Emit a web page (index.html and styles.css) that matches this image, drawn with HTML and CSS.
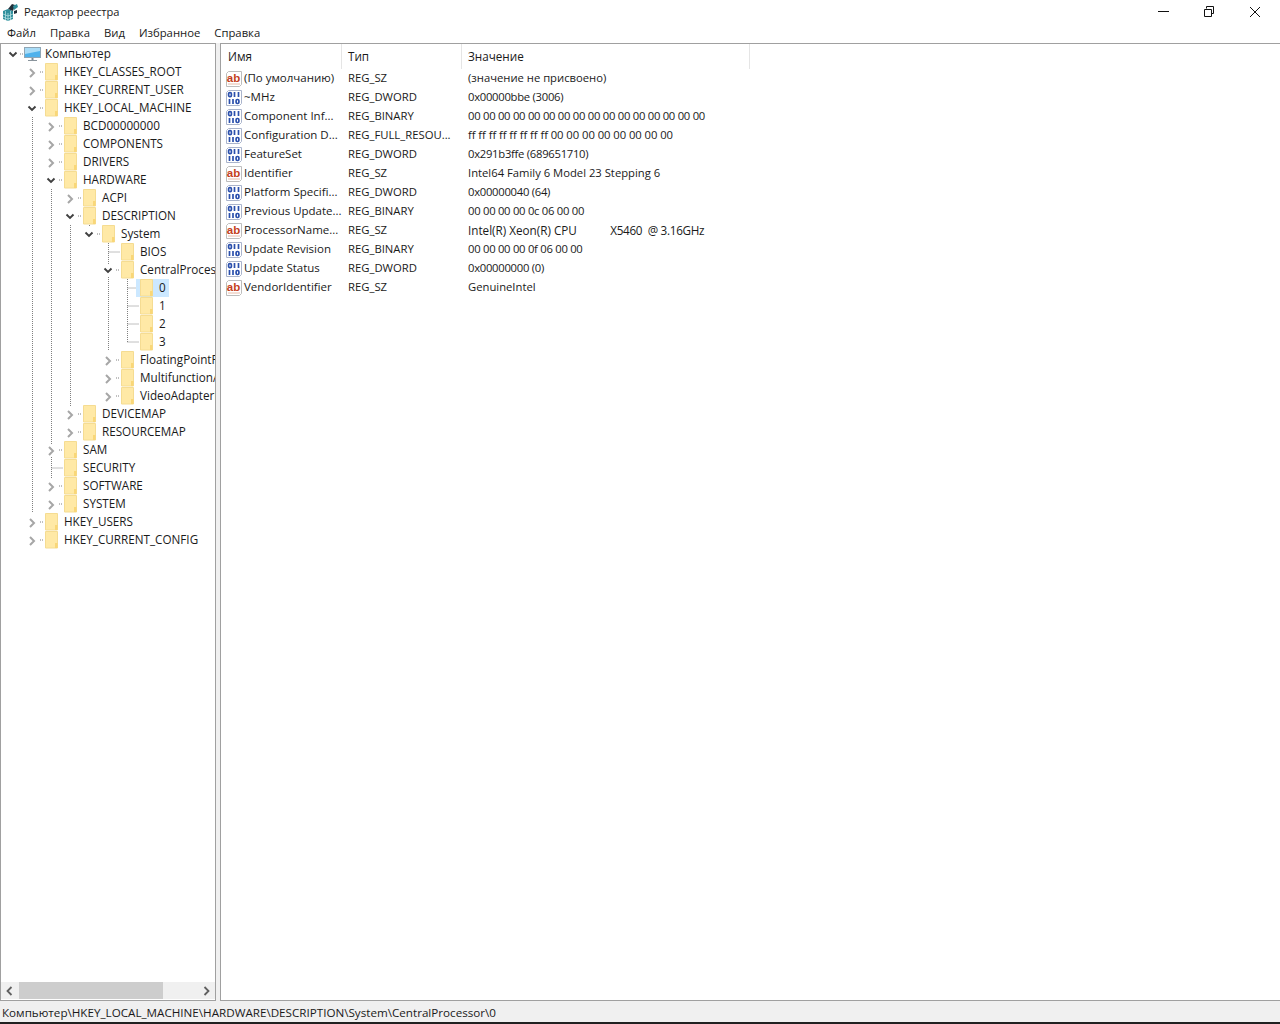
FILE: index.html
```html
<!DOCTYPE html>
<html lang="ru">
<head>
<meta charset="utf-8">
<title>Редактор реестра</title>
<link rel="stylesheet" href="styles.css">
</head>
<body>
<svg class="defs" width="0" height="0">
  <defs>
    <symbol id="folder" viewBox="0 0 13 18">
      <path d="M.5.5h12v16.500H.5z" fill="#ffe9a6" stroke="#f5dc92"/>
      <path d="M10 12h2.500v5H10z" fill="#f9d778"/>
    </symbol>
    <symbol id="str" viewBox="0 0 16 16">
      <path d="M.5 2.500l2-2h13v13l-2 2H.500z" fill="#fff" stroke="#bdbdbd"/>
      <text x="7.500" y="10.500" text-anchor="middle" class="ab">ab</text>
      <path d="M2 13h12" stroke="#e6bba8"/>
    </symbol>
    <symbol id="bin" viewBox="0 0 16 16">
      <path d="M.5 2.500l2-2h13v13l-2 2H.500z" fill="#fff" stroke="#aab4cc"/>
      <g fill="none" stroke="#2b50ad" stroke-width="1.700">
        <rect x="2.600" y="2.600" width="2.800" height="4" rx="1.200"/>
        <path d="M8.500 2v5M12.500 2v5"/>
        <path d="M3.500 9v5M7 9v5"/>
        <rect x="10.100" y="9.500" width="2.800" height="4" rx="1.200"/>
      </g>
    </symbol>
    <symbol id="chev-r" viewBox="0 0 18 18">
      <rect x="1" y="4" width="9" height="12" fill="#fff"/>
      <path d="M3 6l4 4-4 4" fill="none" stroke="#a6a6a6" stroke-width="2"/>
    </symbol>
    <symbol id="chev-d" viewBox="0 0 18 18">
      <rect x="0" y="4" width="11" height="11" fill="#fff"/>
      <path d="M1.500 7.500L5 11l3.500-3.500" fill="none" stroke="#404040" stroke-width="1.900"/>
    </symbol>
  </defs>
</svg>

<header class="titlebar">
  <svg class="app-icon" width="18" height="18" viewBox="0 0 18 18">
    <path d="M2 8l5-2 5 2v8l-5 2-5-2z" fill="#2f8f9c"/>
    <path d="M7 10v8M2 11l5 2 5-2M2 14l5 2 5-2M4.500 8v9M9.500 8v9" stroke="#bfe6e8" stroke-width=".7" fill="none"/>
    <path d="M7 6l4-5 3 1-2 6z" fill="#23303a"/>
    <path d="M12 3l4-2 1 3-4 3z" fill="#2f8f9c"/>
    <path d="M13 8l3-1v3l-3 1z" fill="#23303a"/>
  </svg>
  <span class="title">Редактор реестра</span>
  <div class="win-buttons">
    <svg width="12" height="12" viewBox="0 0 12 12"><path d="M1 5.500h11" stroke="#111"/></svg>
    <svg width="12" height="12" viewBox="0 0 12 12"><path d="M3.500 2.500v-2h7v7h-2M1.500 3.500h7v7h-7z" fill="none" stroke="#111"/></svg>
    <svg width="12" height="12" viewBox="0 0 12 12"><path d="M1 1l10 10M11 1L1 11" stroke="#111"/></svg>
  </div>
</header>

<nav class="menubar">
  <span>Файл</span><span>Правка</span><span>Вид</span><span>Избранное</span><span>Справка</span>
</nav>

<main class="panes">
  <section class="tree-pane">
    <svg class="tree-lines" width="214" height="500" viewBox="0 0 214 500">
      <g fill="none" stroke="#808080" stroke-dasharray="1 1" transform="translate(-1 1)">
        <path d="M32.500 72v396M51.500 144v289M70.500 180v181M89.500 172v10M108.500 198v108M127.500 234v63"/>
        <path d="M20 9h4M40 27h3M40 45h3M40 63h3M40 477h3M40 495h3"/>
        <path d="M59 81h3M59 99h3M59 117h3M59 135h3M59 405h3M51.500 423h11M59 441h3M59 459h3"/>
        <path d="M78 153h3M78 171h3M78 369h3M78 387h3"/>
        <path d="M97 189h3"/>
        <path d="M108.500 207h11M116 225h3M116 315h3M116 333h3M116 351h3"/>
        <path d="M127.500 243h11M127.500 261h11M127.500 279h11M127.500 297h11"/>
      </g>
    </svg>
    <ul class="tree">
      <li class="node d0"><svg class="chev"><use href="#chev-d"/></svg><svg class="computer" width="17" height="18" viewBox="0 0 17 18"><rect x=".5" y="2.500" width="16" height="10" fill="#4fb2ec" stroke="#8fa6b5"/><path d="M1 3h15v3L1 9z" fill="#a9dcf7"/><path d="M8.500 13v2" stroke="#7a8a96" stroke-width="2"/><path d="M4 15.500h9" stroke="#8a949c"/></svg><span>Компьютер</span></li>
      <li class="node d1"><svg class="chev"><use href="#chev-r"/></svg><svg class="folder"><use href="#folder"/></svg><span>HKEY_CLASSES_ROOT</span></li>
      <li class="node d1"><svg class="chev"><use href="#chev-r"/></svg><svg class="folder"><use href="#folder"/></svg><span>HKEY_CURRENT_USER</span></li>
      <li class="node d1"><svg class="chev"><use href="#chev-d"/></svg><svg class="folder"><use href="#folder"/></svg><span>HKEY_LOCAL_MACHINE</span></li>
      <li class="node d2"><svg class="chev"><use href="#chev-r"/></svg><svg class="folder"><use href="#folder"/></svg><span>BCD00000000</span></li>
      <li class="node d2"><svg class="chev"><use href="#chev-r"/></svg><svg class="folder"><use href="#folder"/></svg><span>COMPONENTS</span></li>
      <li class="node d2"><svg class="chev"><use href="#chev-r"/></svg><svg class="folder"><use href="#folder"/></svg><span>DRIVERS</span></li>
      <li class="node d2"><svg class="chev"><use href="#chev-d"/></svg><svg class="folder"><use href="#folder"/></svg><span>HARDWARE</span></li>
      <li class="node d3"><svg class="chev"><use href="#chev-r"/></svg><svg class="folder"><use href="#folder"/></svg><span>ACPI</span></li>
      <li class="node d3"><svg class="chev"><use href="#chev-d"/></svg><svg class="folder"><use href="#folder"/></svg><span>DESCRIPTION</span></li>
      <li class="node d4"><svg class="chev"><use href="#chev-d"/></svg><svg class="folder"><use href="#folder"/></svg><span>System</span></li>
      <li class="node d5"><span class="chev"></span><svg class="folder"><use href="#folder"/></svg><span>BIOS</span></li>
      <li class="node d5"><svg class="chev"><use href="#chev-d"/></svg><svg class="folder"><use href="#folder"/></svg><span>CentralProcessor</span></li>
      <li class="node d6"><span class="chev"></span><div class="selected"><svg class="folder"><use href="#folder"/></svg><span>0</span></div></li>
      <li class="node d6"><span class="chev"></span><svg class="folder"><use href="#folder"/></svg><span>1</span></li>
      <li class="node d6"><span class="chev"></span><svg class="folder"><use href="#folder"/></svg><span>2</span></li>
      <li class="node d6"><span class="chev"></span><svg class="folder"><use href="#folder"/></svg><span>3</span></li>
      <li class="node d5"><svg class="chev"><use href="#chev-r"/></svg><svg class="folder"><use href="#folder"/></svg><span>FloatingPointProcessor</span></li>
      <li class="node d5"><svg class="chev"><use href="#chev-r"/></svg><svg class="folder"><use href="#folder"/></svg><span>MultifunctionAdapter</span></li>
      <li class="node d5"><svg class="chev"><use href="#chev-r"/></svg><svg class="folder"><use href="#folder"/></svg><span>VideoAdapterBusses</span></li>
      <li class="node d3"><svg class="chev"><use href="#chev-r"/></svg><svg class="folder"><use href="#folder"/></svg><span>DEVICEMAP</span></li>
      <li class="node d3"><svg class="chev"><use href="#chev-r"/></svg><svg class="folder"><use href="#folder"/></svg><span>RESOURCEMAP</span></li>
      <li class="node d2"><svg class="chev"><use href="#chev-r"/></svg><svg class="folder"><use href="#folder"/></svg><span>SAM</span></li>
      <li class="node d2"><span class="chev"></span><svg class="folder"><use href="#folder"/></svg><span>SECURITY</span></li>
      <li class="node d2"><svg class="chev"><use href="#chev-r"/></svg><svg class="folder"><use href="#folder"/></svg><span>SOFTWARE</span></li>
      <li class="node d2"><svg class="chev"><use href="#chev-r"/></svg><svg class="folder"><use href="#folder"/></svg><span>SYSTEM</span></li>
      <li class="node d1"><svg class="chev"><use href="#chev-r"/></svg><svg class="folder"><use href="#folder"/></svg><span>HKEY_USERS</span></li>
      <li class="node d1"><svg class="chev"><use href="#chev-r"/></svg><svg class="folder"><use href="#folder"/></svg><span>HKEY_CURRENT_CONFIG</span></li>
    </ul>
    <div class="hscroll">
      <svg class="arrow" width="10" height="12"><path d="M6.500 2L2.500 6l4 4" fill="none" stroke="#606060" stroke-width="1.800"/></svg>
      <div class="track"><div class="thumb"></div></div>
      <svg class="arrow" width="10" height="12"><path d="M3.500 2l4 4-4 4" fill="none" stroke="#606060" stroke-width="1.800"/></svg>
    </div>
  </section>

  <section class="list-pane">
    <div class="list-head">
      <div class="col-name">Имя</div><div class="col-type">Тип</div><div class="col-value">Значение</div>
    </div>
    <div class="row"><svg class="ico"><use href="#str"/></svg><div class="name">(По умолчанию)</div><div class="type">REG_SZ</div><div class="value">(значение не присвоено)</div></div>
    <div class="row"><svg class="ico"><use href="#bin"/></svg><div class="name">~MHz</div><div class="type">REG_DWORD</div><div class="value num">0x00000bbe (3006)</div></div>
    <div class="row"><svg class="ico"><use href="#bin"/></svg><div class="name">Component Inf...</div><div class="type">REG_BINARY</div><div class="value num">00 00 00 00 00 00 00 00 00 00 00 00 00 00 00 00</div></div>
    <div class="row"><svg class="ico"><use href="#bin"/></svg><div class="name">Configuration D...</div><div class="type">REG_FULL_RESOU...</div><div class="value hexff">ff ff ff ff ff ff ff ff 00 00 00 00 00 00 00 00</div></div>
    <div class="row"><svg class="ico"><use href="#bin"/></svg><div class="name">FeatureSet</div><div class="type">REG_DWORD</div><div class="value num">0x291b3ffe (689651710)</div></div>
    <div class="row"><svg class="ico"><use href="#str"/></svg><div class="name">Identifier</div><div class="type">REG_SZ</div><div class="value">Intel64 Family 6 Model 23 Stepping 6</div></div>
    <div class="row"><svg class="ico"><use href="#bin"/></svg><div class="name">Platform Specifi...</div><div class="type">REG_DWORD</div><div class="value num">0x00000040 (64)</div></div>
    <div class="row"><svg class="ico"><use href="#bin"/></svg><div class="name">Previous Update...</div><div class="type">REG_BINARY</div><div class="value num">00 00 00 00 0c 06 00 00</div></div>
    <div class="row"><svg class="ico"><use href="#str"/></svg><div class="name">ProcessorName...</div><div class="type">REG_SZ</div><div class="value cpu">Intel(R) Xeon(R) CPU           <span class="cpu-tail">X5460  @ 3.16GHz</span></div></div>
    <div class="row"><svg class="ico"><use href="#bin"/></svg><div class="name">Update Revision</div><div class="type">REG_BINARY</div><div class="value num">00 00 00 00 0f 06 00 00</div></div>
    <div class="row"><svg class="ico"><use href="#bin"/></svg><div class="name">Update Status</div><div class="type">REG_DWORD</div><div class="value num">0x00000000 (0)</div></div>
    <div class="row"><svg class="ico"><use href="#str"/></svg><div class="name">VendorIdentifier</div><div class="type">REG_SZ</div><div class="value">GenuineIntel</div></div>
  </section>
</main>

<footer class="statusbar">Компьютер\HKEY_LOCAL_MACHINE\HARDWARE\DESCRIPTION\System\CentralProcessor\0</footer>
</body>
</html>
```
FILE: styles.css
```css
* { box-sizing: border-box; }
html, body { margin: 0; height: 100%; }
body {
  width: 1280px;
  height: 1024px;
  overflow: hidden;
  display: flex;
  flex-direction: column;
  background: #f0f0f0;
  color: #1a1a1a;
  font: 11.7px/18px "Open Sans", "Noto Sans", sans-serif;
}
.defs { position: absolute; }
.ab { font: bold 11.5px "Liberation Sans", sans-serif; fill: #c4401c; }

.titlebar { height: 23px; flex: none; display: flex; align-items: center; padding-left: 1px; background: #fff; }
.app-icon { flex: none; }
.title { margin-left: 5px; font-size: 11.100px; }
.win-buttons { margin-left: auto; display: flex; gap: 34px; padding-right: 19px; }
.win-buttons svg { display: block; }

.menubar { height: 20px; flex: none; display: flex; gap: 14px; padding-left: 7px; background: #fff; align-items: center; font-size: 11.300px; }

.panes { flex: 1; min-height: 0; display: flex; gap: 4px; }

.tree-pane {
  position: relative;
  width: 216px;
  flex: none;
  display: flex;
  flex-direction: column;
  background: #fff;
  border: 1px solid #a0a0a0;
  overflow: hidden;
}
.tree-lines { position: absolute; left: 0; top: 0; }
.tree { position: relative; flex: 1; min-height: 0; list-style: none; margin: 0; padding: 1px 1px 0 0; overflow: hidden; }
.node { display: flex; align-items: center; height: 18px; white-space: nowrap; }
.node > span:not(.chev), .selected > span { margin-bottom: 2px; }
.d0 { padding-left: 7px; }
.d1 { padding-left: 26px; }
.d2 { padding-left: 45px; }
.d3 { padding-left: 64px; }
.d4 { padding-left: 83px; }
.d5 { padding-left: 102px; }
.d6 { padding-left: 121px; }
.chev { width: 18px; height: 18px; flex: none; display: block; }
.folder { width: 13px; height: 18px; flex: none; margin-right: 6px; }
.computer { flex: none; margin: 0 4px 0 -2px; }
.selected { display: flex; align-items: center; height: 18px; margin-left: -4px; padding: 0 3px 0 4px; background: #cce8ff; }

.hscroll { flex: none; height: 17px; display: flex; align-items: center; background: #f0f0f0; margin-bottom: 1px; }
.arrow { flex: none; margin: 0 4px; }
.track { flex: 1; height: 17px; }
.thumb { width: 144px; height: 17px; background: #cdcdcd; }

.list-pane { flex: 1; min-width: 0; background: #fff; border: 1px solid #a0a0a0; border-right: 0; overflow: hidden; }
.list-head { display: flex; height: 25px; align-items: center; width: 529px; }
.list-head div { height: 25px; line-height: 25px; padding-left: 6px; border-right: 1px solid #e5e5e5; }
.list-head .col-name { width: 121px; padding-left: 7px; }
.col-type { width: 120px; }
.col-value { width: 288px; }
.row { display: flex; align-items: center; height: 19px; white-space: nowrap; padding-left: 5px; }
.ico { width: 16px; height: 16px; flex: none; margin-right: 2px; }
.name, .type, .value { margin-bottom: 2px; flex: none; }
.name { width: 104px; font-size: 11.500px; }
.type { width: 120px; font-size: 11.300px; }
.value { white-space: pre; font-size: 11.250px; }
.num { letter-spacing: -.27px; }
.hexff { letter-spacing: -.05px; }
.cpu { font-size: 11.700px; }
.cpu-tail { letter-spacing: -.3px; }

.statusbar { flex: none; height: 23px; padding: 1px 0 0 2px; line-height: 20px; background: #f0f0f0; border-bottom: 2px solid #202020; border-top: 1px solid #f0f0f0; font-size: 11.650px; }
```
